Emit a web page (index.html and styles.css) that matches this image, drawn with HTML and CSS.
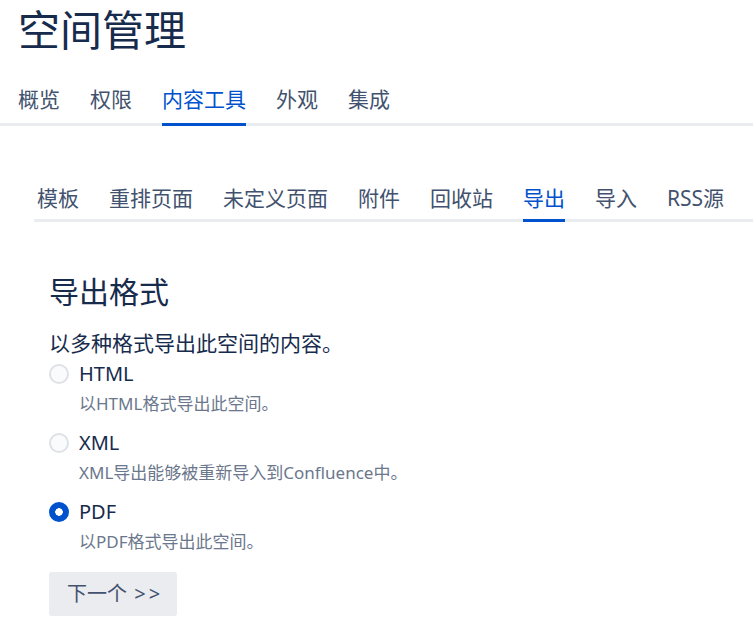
FILE: index.html
```
<!DOCTYPE html>
<html lang="zh-CN">
<head>
<meta charset="utf-8">
<title>空间管理</title>
<link rel="stylesheet" href="styles.css">
</head>
<body>
<header class="page-header">
  <h1 class="page-title">空间管理</h1>
</header>
<nav class="main-tabs">
  <a class="tab">概览</a>
  <a class="tab">权限</a>
  <a class="tab active">内容工具</a>
  <a class="tab">外观</a>
  <a class="tab">集成</a>
</nav>
<main class="content">
  <nav class="sub-tabs">
    <a class="tab">模板</a>
    <a class="tab">重排页面</a>
    <a class="tab">未定义页面</a>
    <a class="tab">附件</a>
    <a class="tab">回收站</a>
    <a class="tab active">导出</a>
    <a class="tab">导入</a>
    <a class="tab">RSS源</a>
  </nav>
  <section class="export">
    <h2 class="export-title">导出格式</h2>
    <p class="intro">以多种格式导出此空间的内容。</p>
    <div class="option">
      <label class="option-row"><span class="radio"></span><span class="option-label">HTML</span></label>
      <div class="option-desc">以HTML格式导出此空间。</div>
    </div>
    <div class="option">
      <label class="option-row"><span class="radio"></span><span class="option-label">XML</span></label>
      <div class="option-desc">XML导出能够被重新导入到Confluence中。</div>
    </div>
    <div class="option">
      <label class="option-row"><span class="radio checked"></span><span class="option-label">PDF</span></label>
      <div class="option-desc">以PDF格式导出此空间。</div>
    </div>
    <button class="next-btn">下一个 <span class="arrows">&gt;&gt;</span></button>
  </section>
</main>
</body>
</html>
```
FILE: styles.css
```
* { box-sizing: border-box; }
html, body {
  margin: 0;
  padding: 0;
  background: #ffffff;
  font-family: "Noto Sans", "Noto Sans CJK SC", sans-serif;
  color: #172B4D;
}
.page-header {
  padding-left: 18px;
}
.page-title {
  margin: 0;
  font-size: 42px;
  font-weight: 400;
  line-height: 60px;
  color: #172B4D;
}
.main-tabs {
  display: flex;
  gap: 30px;
  padding-left: 18px;
  border-bottom: 3px solid #EBECF0;
}
.tab {
  display: block;
  font-size: 21px;
  line-height: 30px;
  color: #42526E;
  border-bottom: 3px solid transparent;
  margin-bottom: -3px;
  cursor: pointer;
}
.tab.active {
  color: #0052CC;
  border-bottom-color: #0052CC;
}
.main-tabs .tab {
  padding-top: 24px;
  padding-bottom: 9px;
}
.content {
  padding-left: 34px;
}
.sub-tabs {
  display: flex;
  gap: 30px;
  margin-top: 57px;
  padding-left: 3px;
  border-bottom: 3px solid #EBECF0;
}
.sub-tabs .tab {
  padding-bottom: 6px;
}
.export {
  padding-left: 15px;
}
.export-title {
  margin: 50px 0 0;
  font-size: 30px;
  font-weight: 400;
  line-height: 40px;
}
.intro {
  margin: 16px 0 0;
  font-size: 21px;
  line-height: 30px;
}
.option {
  margin-top: 9px;
}
.intro + .option {
  margin-top: 1px;
}
.option-row {
  display: flex;
  align-items: center;
  gap: 10px;
  height: 30px;
}
.radio {
  width: 20px;
  height: 20px;
  border-radius: 50%;
  border: 2px solid #DFE1E6;
  background: #FAFBFC;
  flex: none;
}
.radio.checked {
  border: none;
  background: radial-gradient(circle, #ffffff 0 3.5px, #0052CC 4px);
}
.option-label {
  font-size: 20px;
  line-height: 30px;
  color: #172B4D;
}
.option-desc {
  padding-left: 30px;
  font-size: 17px;
  line-height: 30px;
  color: #6B778C;
}
.next-btn {
  display: block;
  margin-top: 15px;
  height: 44px;
  padding: 0 14px 0 18px;
  border: none;
  border-radius: 3px;
  background: #EBECF0;
  color: #42526E;
  font-family: inherit;
  font-size: 20px;
  line-height: 44px;
}
.arrows {
  margin-left: 2px;
  letter-spacing: 3px;
}
```
